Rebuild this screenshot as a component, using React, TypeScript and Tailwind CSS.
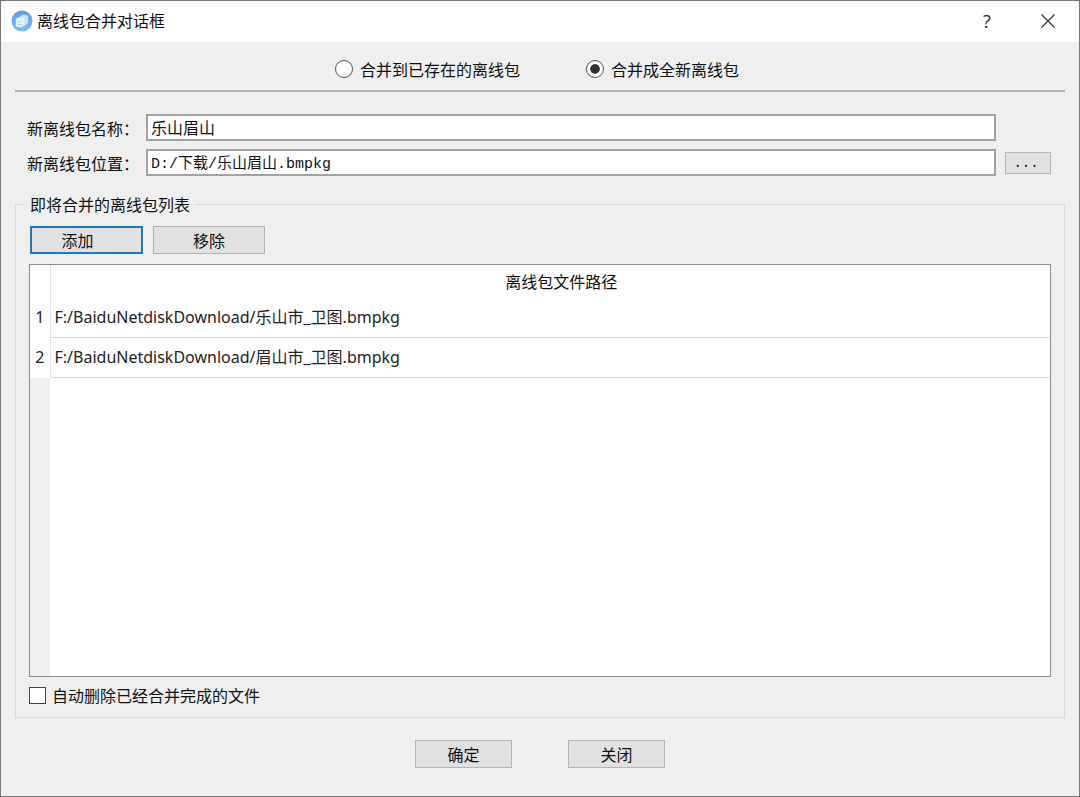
import clsx from "clsx";
import { useState } from "react";

const initialFiles = [
  "F:/BaiduNetdiskDownload/乐山市_卫图.bmpkg",
  "F:/BaiduNetdiskDownload/眉山市_卫图.bmpkg",
];

const modes = [
  { value: "existing", label: "合并到已存在的离线包" },
  { value: "new", label: "合并成全新离线包" },
];

interface IButtonProps {
  text: string;
  className?: string;
  onClick?: () => void;
}

const Button = ({ text, className, onClick }: IButtonProps) => (
  <button
    type="button"
    onClick={onClick}
    className={clsx(
      "flex h-7 items-center justify-center bg-[#e1e1e1] active:bg-[#cce4f7]",
      className,
    )}
  >
    {text}
  </button>
);

const AppIcon = () => (
  <svg viewBox="0 0 22 22" className="size-[22px]" aria-hidden="true">
    <defs>
      <linearGradient id="disc" x1="0" y1="0" x2="0" y2="1">
        <stop offset="0" stopColor="#5b9df0" />
        <stop offset="1" stopColor="#7dbcf5" />
      </linearGradient>
    </defs>
    <circle cx="11" cy="11" r="10.5" fill="url(#disc)" />
    <path d="m9 6.2 3.2-1.9 5 1.2v7.2l-2.9 2.8-5.3-.6z" fill="#c6e2fc" />
    <path d="m4.8 9 3-1.7 5.7.8v7.3l-2.8 2.1-5.9-1z" fill="#e4f2fe" />
    <path
      d="m6.2 11.6 4.8.6m-4.8 1.9 4.8.6"
      stroke="#9fccf8"
      strokeWidth="0.8"
    />
  </svg>
);

const TitleBar = () => (
  <header className="flex h-[41px] items-center bg-white pr-6 pb-0.5 pl-[10px]">
    <AppIcon />
    <h1 className="ml-1 flex-1 pb-0.5">离线包合并对话框</h1>
    <button
      type="button"
      aria-label="帮助"
      className="mr-[46px] flex h-6 w-4 items-center justify-center font-['Open_Sans','Noto_Sans_CJK_SC',sans-serif] text-lg text-[#222]"
    >
      ?
    </button>
    <button type="button" aria-label="关闭窗口">
      <svg viewBox="0 0 14 14" className="size-[14px]">
        <path d="m.5.5 13 13m0-13-13 13" stroke="#333" strokeWidth="1.2" />
      </svg>
    </button>
  </header>
);

const inputStyle =
  "h-[27px] w-full min-w-0 border-2 border-[#a2a2a2] bg-white px-[3px] pb-0.5 outline-none";

const App = () => {
  const [mode, setMode] = useState("new");
  const [name, setName] = useState("乐山眉山");
  const [path, setPath] = useState("D:/下载/乐山眉山.bmpkg");
  const [files, setFiles] = useState(initialFiles);
  const [autoDelete, setAutoDelete] = useState(false);

  return (
    <div className="flex min-h-screen flex-col border border-[#777] bg-[#efefef] font-['Noto_Sans_CJK_SC',sans-serif] text-base leading-6 text-[#111]">
      <TitleBar />

      <main className="flex flex-1 flex-col px-[14px] pb-7">
        <div className="flex h-[50px] items-center justify-center gap-[66px] border-b-2 border-[#b4b4b4] pt-1.5 pr-1.5">
          {modes.map((item) => (
            <label key={item.value} className="flex items-center gap-[7px]">
              <input
                type="radio"
                name="mode"
                value={item.value}
                checked={mode === item.value}
                onChange={() => setMode(item.value)}
                className="size-[18px] appearance-none rounded-full border border-[#555] bg-white bg-clip-content checked:bg-[#333] checked:p-[3px] checked:shadow-[inset_0_0_0_3px_white]"
              />
              {item.label}
            </label>
          ))}
        </div>

        <form className="mt-[22px] grid grid-cols-[110px_1fr_46px] items-center gap-x-[9px] gap-y-2 pr-[14px] pl-3">
          <label htmlFor="name" className="whitespace-nowrap">
            新离线包名称：
          </label>
          <input
            id="name"
            type="text"
            value={name}
            onChange={(e) => setName(e.target.value)}
            className={inputStyle}
          />
          <label htmlFor="path" className="col-start-1 whitespace-nowrap">
            新离线包位置：
          </label>
          <input
            id="path"
            type="text"
            value={path}
            onChange={(e) => setPath(e.target.value)}
            className={clsx(
              inputStyle,
              "font-['Liberation_Mono','Noto_Sans_CJK_SC',monospace] text-[15px]",
            )}
          />
          <button
            type="button"
            aria-label="浏览"
            className="flex h-[22px] items-center justify-center border border-[#b4b4b4] bg-[#e1e1e1] pr-1 font-['Liberation_Mono',monospace] text-sm leading-5"
          >
            ...
          </button>
        </form>

        <fieldset className="mt-4 flex-1 border border-[#dcdcdc] px-[13px]">
          <legend className="-ml-1 px-[5px]">即将合并的离线包列表</legend>

          <div className="mt-[10px] flex gap-[10px] pl-px">
            <Button
              text="添加"
              className="w-[113px] border-2 border-[#1879c9] pr-[18px]"
            />
            <Button
              text="移除"
              className="w-28 border border-[#b4b4b4]"
              onClick={() => setFiles((prev) => prev.slice(0, -1))}
            />
          </div>

          <div className="mt-[10px] flex min-h-[413px] flex-col border border-[#8a8f94] bg-white">
            <table className="w-full table-fixed border-collapse">
              <thead>
                <tr className="h-8">
                  <th className="w-5 border-r border-[#e5e5e5]" />
                  <th className="pl-[22px] font-normal">离线包文件路径</th>
                </tr>
              </thead>
              <tbody className="font-['Noto_Sans','Noto_Sans_CJK_SC',sans-serif] text-[#222]">
                {files.map((file, i) => (
                  <tr key={file} className="h-10">
                    <th className="border-r border-[#e5e5e5] font-normal">
                      {i + 1}
                    </th>
                    <td className="border-b border-[#dcdcdc] pl-1">{file}</td>
                  </tr>
                ))}
              </tbody>
            </table>
            <div className="w-5 flex-1 bg-[#eeeff0]" />
          </div>

          <label className="mt-[6px] mb-[9px] flex w-fit items-center gap-[6px]">
            <input
              type="checkbox"
              checked={autoDelete}
              onChange={(e) => setAutoDelete(e.target.checked)}
              className="size-[17px] appearance-none border border-[#444] bg-white checked:bg-[#333] checked:bg-clip-content checked:p-[3px]"
            />
            自动删除已经合并完成的文件
          </label>
        </fieldset>

        <footer className="mt-[22px] flex justify-center gap-14">
          <Button text="确定" className="w-[97px] border border-[#b4b4b4]" />
          <Button text="关闭" className="w-[97px] border border-[#b4b4b4]" />
        </footer>
      </main>
    </div>
  );
};

export default App;
